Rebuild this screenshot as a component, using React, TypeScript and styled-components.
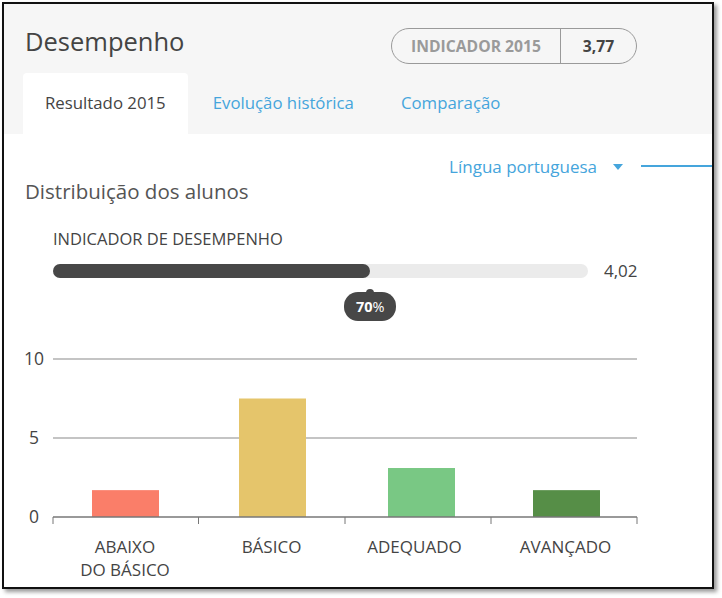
import React from "react";
import styled, { createGlobalStyle } from "styled-components";

const GlobalStyle = createGlobalStyle`
  html, body { margin: 0; padding: 0; background: #ffffff; }
  body { font-family: "Open Sans", "Liberation Sans", sans-serif; }
  * { box-sizing: border-box; }
`;

const Page = styled.div`
  padding: 2px 0 0 2px;
  width: 722px;
  height: 598px;
`;

const Frame = styled.div`
  width: 712px;
  height: 587px;
  border: 2px solid #111;
  background: #fff;
  box-shadow: 3px 3px 4px rgba(0, 0, 0, 0.4);
  overflow: hidden;
  display: flex;
  flex-direction: column;
`;

const Header = styled.header`
  background: #f6f6f6;
  padding: 0 0 0 19px;
  display: flex;
  flex-direction: column;
`;

const TitleRow = styled.div`
  height: 69px;
  display: flex;
  align-items: center;
  padding: 4px 0 0 2px;
`;

const Title = styled.h1`
  margin: 0;
  font-size: 25.5px;
  font-weight: 400;
  color: #444;
  width: 366px;
`;

const Pill = styled.div`
  display: flex;
  align-items: stretch;
  height: 36px;
  border: 1px solid #9a9a9a;
  border-radius: 18px;
  overflow: hidden;
  margin-top: 10px;
`;

const PillCell = styled.div<{ $dark?: boolean; $w: number }>`
  width: ${(p) => p.$w}px;
  display: flex;
  align-items: center;
  justify-content: center;
  font-size: 15.7px;
  font-weight: 700;
  color: ${(p) => (p.$dark ? "#444" : "#9a9a9a")};
  & + & { border-left: 1px solid #9a9a9a; }
`;

const Tabs = styled.nav`
  display: flex;
  height: 61px;
`;

const Tab = styled.div<{ $active?: boolean }>`
  display: flex;
  align-items: center;
  padding: 0 22px 2px 22px;
  margin-right: 3px;
  font-size: 16.8px;
  color: ${(p) => (p.$active ? "#444" : "#45a5dc")};
  background: ${(p) => (p.$active ? "#fff" : "transparent")};
  border-radius: 4px 4px 0 0;
`;

const Body = styled.main`
  position: relative;
  flex: 1;
  display: flex;
  flex-direction: column;
`;

const SubjectRow = styled.div`
  display: flex;
  justify-content: flex-end;
  align-items: center;
  height: 20px;
  margin-top: 22px;
`;

const SubjectLabel = styled.span`
  font-size: 17px;
  color: #45a5dc;
`;

const Caret = styled.span`
  width: 0;
  height: 0;
  border-left: 5px solid transparent;
  border-right: 5px solid transparent;
  border-top: 6px solid #45a5dc;
  margin: 1px 18px 0 16px;
`;

const SubjectLine = styled.span`
  width: 71px;
  height: 2px;
  background: #45a5dc;
`;

const SectionTitle = styled.h2`
  margin: 3px 0 0 21px;
  font-size: 20.5px;
  line-height: 24px;
  font-weight: 400;
  color: #555;
`;

const Indicator = styled.section`
  margin: 27px 0 0 49px;
  display: flex;
  flex-direction: column;
`;

const IndicatorLabel = styled.div`
  font-size: 16.5px;
  line-height: 18px;
  color: #444;
`;

const BarRow = styled.div`
  margin-top: 11px;
  display: flex;
  align-items: center;
  gap: 16px;
`;

const Track = styled.div`
  position: relative;
  width: 535px;
  height: 14px;
  border-radius: 7px;
  background: #ebebeb;
`;

const Fill = styled.div`
  height: 100%;
  border-radius: 7px;
  background: #474747;
`;

const BarValue = styled.span`
  font-size: 17px;
  color: #444;
`;

const Bubble = styled.div`
  position: absolute;
  top: 28px;
  transform: translateX(-50%);
  background: #474747;
  color: #fff;
  font-size: 14.5px;
  font-weight: 700;
  height: 29px;
  width: 52px;
  border-radius: 14px;
  display: flex;
  align-items: center;
  justify-content: center;
  &::before {
    content: "";
    position: absolute;
    top: -3px;
    left: 50%;
    width: 8px;
    height: 8px;
    border-radius: 50%;
    background: #474747;
    transform: translateX(-50%);
  }
`;

const Pct = styled.span`
  font-weight: 400;
`;

const ChartSvg = styled.svg`
  display: block;
  margin-top: 49px;
  font-family: "Open Sans", "Liberation Sans", sans-serif;
`;

const bars = [
  { label: ["ABAIXO", "DO BÁSICO"], value: 1.7, color: "#fa7e69", cx: 121.5, lx: 121 },
  { label: ["BÁSICO"], value: 7.5, color: "#e5c56b", cx: 268.5, lx: 267.5 },
  { label: ["ADEQUADO"], value: 3.1, color: "#79c884", cx: 417.5, lx: 410.5 },
  { label: ["AVANÇADO"], value: 1.7, color: "#568e47", cx: 562.5, lx: 561.5 },
];

const Chart: React.FC = () => {
  const left = 49;
  const right = 633;
  const zeroY = 186;
  const unit = 15.8;
  const ticks = [49, 194.5, 341, 487, 633];
  const barW = 67;
  return (
    <ChartSvg width={707} height={256} viewBox="0 0 707 256">
      {[10, 5].map((v) => (
        <line key={v} x1={left} x2={right} y1={zeroY - v * unit} y2={zeroY - v * unit} stroke="#c4c4c4" strokeWidth={2} />
      ))}
      {[10, 5, 0].map((v) => (
        <text key={v} x={30} y={zeroY - v * unit + 6} textAnchor="middle" fontSize={17.5} fill="#444">
          {v}
        </text>
      ))}
      {bars.map((b, i) => {
        const h = b.value * unit;
        return (
          <g key={i}>
            <rect x={b.cx - barW / 2} y={zeroY - h} width={barW} height={h} fill={b.color} />
            {b.label.map((l, j) => (
              <text key={j} x={b.lx} y={222 + j * 23} textAnchor="middle" fontSize={17} fill="#444">
                {l}
              </text>
            ))}
          </g>
        );
      })}
      <line x1={left} x2={right} y1={zeroY} y2={zeroY} stroke="#777" strokeWidth={1.5} />
      {ticks.map((x) => (
        <line key={x} x1={x} x2={x} y1={zeroY} y2={zeroY + 7} stroke="#777" strokeWidth={1} />
      ))}
    </ChartSvg>
  );
};

export default function App() {
  const pct = 59.3;
  return (
    <Page>
      <GlobalStyle />
      <Frame>
        <Header>
          <TitleRow>
            <Title>Desempenho</Title>
            <Pill>
              <PillCell $w={168}>INDICADOR 2015</PillCell>
              <PillCell $w={76} $dark>3,77</PillCell>
            </Pill>
          </TitleRow>
          <Tabs>
            <Tab $active>Resultado 2015</Tab>
            <Tab>Evolução histórica</Tab>
            <Tab>Comparação</Tab>
          </Tabs>
        </Header>
        <Body>
          <SubjectRow>
            <SubjectLabel>Língua portuguesa</SubjectLabel>
            <Caret />
            <SubjectLine />
          </SubjectRow>
          <SectionTitle>Distribuição dos alunos</SectionTitle>
          <Indicator>
            <IndicatorLabel>INDICADOR DE DESEMPENHO</IndicatorLabel>
            <BarRow>
              <Track>
                <Fill style={{ width: `${pct}%` }} />
                <Bubble style={{ left: `${pct}%` }}>
                  70<Pct>%</Pct>
                </Bubble>
              </Track>
              <BarValue>4,02</BarValue>
            </BarRow>
          </Indicator>
          <Chart />
        </Body>
      </Frame>
    </Page>
  );
}
